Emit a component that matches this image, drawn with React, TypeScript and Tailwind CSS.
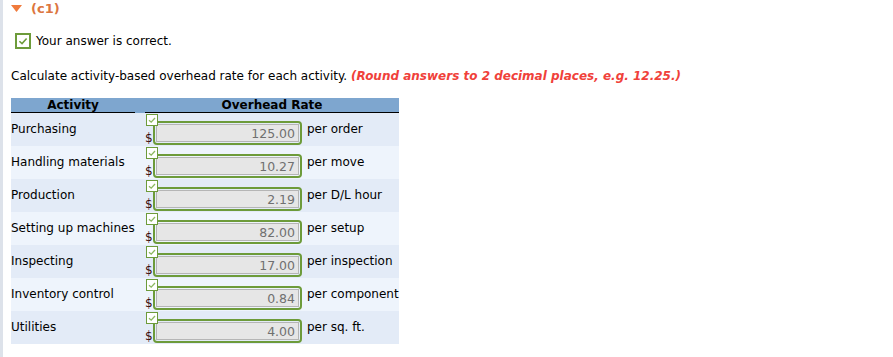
import React from 'react'

const rows = [
  { name: 'Purchasing', value: '125.00', unit: 'per order' },
  { name: 'Handling materials', value: '10.27', unit: 'per move' },
  { name: 'Production', value: '2.19', unit: 'per D/L hour' },
  { name: 'Setting up machines', value: '82.00', unit: 'per setup' },
  { name: 'Inspecting', value: '17.00', unit: 'per inspection' },
  { name: 'Inventory control', value: '0.84', unit: 'per component' },
  { name: 'Utilities', value: '4.00', unit: 'per sq. ft.' },
]

const Check = ({ size, stroke }: { size: number; stroke: string }) => (
  <svg width={size} height={size} viewBox="0 0 10 10">
    <path d="M2 5.2 L4.2 7.2 L8 3" fill="none" stroke={stroke} strokeWidth="1.3" />
  </svg>
)

export default function App() {
  return (
    <div className="w-[893px] h-[357px] bg-white border-l-[3px] border-[#dde2ea] text-[12px] text-black font-['DejaVu_Sans',Verdana,sans-serif] overflow-hidden">
      <div className="flex items-center gap-[9px] pl-[8px] pt-[1px] h-[16px]">
        <svg width="11" height="7" viewBox="0 0 11 7">
          <path d="M0 0 L11 0 L5.5 7 Z" fill="#f07a3c" />
        </svg>
        <span className="font-bold text-[#dc7640] text-[13px]">(c1)</span>
      </div>

      <div className="flex items-center gap-[5px] pl-[12px] mt-[16px]">
        <div className="w-[16px] h-[16px] border-2 border-[#6d9b3a] bg-white flex items-center justify-center">
          <Check size={12} stroke="#6d9b3a" />
        </div>
        <span>Your answer is correct.</span>
      </div>

      <div className="pl-[8px] mt-[18px] leading-[16px]">
        Calculate activity-based overhead rate for each activity.{' '}
        <span className="italic font-bold text-[#f0413a]">(Round answers to 2 decimal places, e.g. 12.25.)</span>
      </div>

      <div className="ml-[8px] mt-[14px] w-[388px]">
        <div className="grid grid-cols-[124px_10px_254px] bg-[#7ea6cf] font-bold h-[15px] leading-[14px]">
          <div className="text-center border-b border-black">Activity</div>
          <div />
          <div className="text-center border-b border-black">Overhead Rate</div>
        </div>
        {rows.map((r, i) => (
          <div
            key={r.name}
            className={`grid grid-cols-[124px_10px_254px] h-[33px] ${i % 2 === 0 ? 'bg-[#e3ebf7]' : 'bg-[#eef4fc]'}`}
          >
            <div className="flex items-center pb-[1px] whitespace-nowrap">{r.name}</div>
            <div />
            <div className="relative flex items-end pb-[1px]">
              <div className="absolute left-[1px] top-[1px] z-10 w-[12px] h-[12px] border border-[#6d9b3a] bg-white flex items-center justify-center">
                <Check size={10} stroke="#8cb860" />
              </div>
              <span className="w-[8px] text-[#3a0a0a] leading-[13px]">$</span>
              <div className="w-[149px] h-[24px] border-2 border-[#6d9b3a] rounded-[4px] p-[1px]">
                <div className="h-full border border-[#b5b5b5] bg-[#e6e6e6] text-right pr-[3px] text-[#707070] leading-[17px] text-[12.5px]">
                  {r.value}
                </div>
              </div>
              <span className="self-center ml-[5px] pb-[1px] whitespace-nowrap">{r.unit}</span>
            </div>
          </div>
        ))}
      </div>
    </div>
  )
}
